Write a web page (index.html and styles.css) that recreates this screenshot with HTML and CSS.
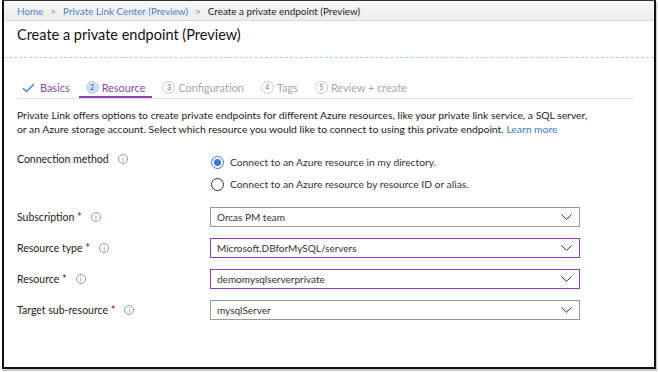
FILE: index.html
```html
<!DOCTYPE html>
<html lang="en">
<head>
    <meta charset="UTF-8">
    <title>Create a private endpoint (Preview)</title>
    <link rel="stylesheet" href="styles.css">
</head>
<body>
    <div class="frame">
        <div class="breadcrumb">
            <a>Home</a>
            <span class="sep">&gt;</span>
            <a>Private Link Center (Preview)</a>
            <span class="sep">&gt;</span>
            <span class="current">Create a private endpoint (Preview)</span>
        </div>

        <h1 class="title">Create a private endpoint (Preview)</h1>
        <div class="dotted"></div>

        <div class="tabs">
            <div class="tab done">
                <svg class="check" width="13" height="10" viewBox="0 0 13 10"><path d="M1 5.2 L4.6 8.6 L12 1" fill="none" stroke="#3b78d8" stroke-width="1.3"/></svg>
                <span>Basics</span>
            </div>
            <div class="tab active">
                <span class="step">2</span>
                <span>Resource</span>
            </div>
            <div class="tab">
                <span class="step">3</span>
                <span>Configuration</span>
            </div>
            <div class="tab">
                <span class="step">4</span>
                <span>Tags</span>
            </div>
            <div class="tab">
                <span class="step">5</span>
                <span>Review + create</span>
            </div>
        </div>

        <p class="intro">Private Link offers options to create private endpoints for different Azure resources, like your private link service, a SQL server,<br>or an Azure storage account. Select which resource you would like to connect to using this private endpoint. <a>Learn more</a></p>

        <div class="form">
            <div class="label">Connection method <i class="info">i</i></div>
            <div class="radios">
                <label class="radio"><span class="dot on"></span>Connect to an Azure resource in my directory.</label>
                <label class="radio"><span class="dot"></span>Connect to an Azure resource by resource ID or alias.</label>
            </div>

            <div class="label">Subscription <b class="req">*</b> <i class="info">i</i></div>
            <div class="select">Orcas PM team<svg width="11" height="6" viewBox="0 0 11 6"><path d="M0.5 0.5 L5.5 5.3 L10.5 0.5" fill="none" stroke="#333" stroke-width="1"/></svg></div>

            <div class="label">Resource type <b class="req">*</b> <i class="info">i</i></div>
            <div class="select focus">Microsoft.DBforMySQL/servers<svg width="11" height="6" viewBox="0 0 11 6"><path d="M0.5 0.5 L5.5 5.3 L10.5 0.5" fill="none" stroke="#333" stroke-width="1"/></svg></div>

            <div class="label">Resource <b class="req">*</b> <i class="info">i</i></div>
            <div class="select focus">demomysqlserverprivate<svg width="11" height="6" viewBox="0 0 11 6"><path d="M0.5 0.5 L5.5 5.3 L10.5 0.5" fill="none" stroke="#333" stroke-width="1"/></svg></div>

            <div class="label">Target sub-resource <b class="req">*</b> <i class="info">i</i></div>
            <div class="select">mysqlServer<svg width="11" height="6" viewBox="0 0 11 6"><path d="M0.5 0.5 L5.5 5.3 L10.5 0.5" fill="none" stroke="#333" stroke-width="1"/></svg></div>
        </div>
    </div>
</body>
</html>
```

FILE: styles.css
```css
* {
    margin: 0;
    padding: 0;
    box-sizing: border-box;
}

html, body {
    width: 100%;
    height: 100%;
    background: #fff;
}

body {
    font-family: Lato, "Liberation Sans", Arial, sans-serif;
    color: #252525;
    font-size: 10.5px;
}

.frame {
    width: 654px;
    height: 369px;
    margin-left: 2px;
    border: 2px solid #111;
    border-top: 1px solid #333;
    box-shadow: 1px 2px 1px #ccc;
    overflow: hidden;
}

.breadcrumb {
    height: 20px;
    padding-left: 13px;
    display: flex;
    align-items: center;
    gap: 6px;
    background: linear-gradient(#f9f9f9, #ececec);
    border-bottom: 1px solid #dcdcdc;
    font-size: 9.9px;
    white-space: nowrap;
}

.breadcrumb a {
    color: #4a7fd0;
}

.breadcrumb .sep {
    color: #888;
    margin: 0 1px;
}

.breadcrumb .current {
    color: #222;
}

.title {
    font-size: 14.5px;
    font-weight: 400;
    color: #111;
    padding: 5px 0 0 13px;
    height: 36px;
}

.dotted {
    border-bottom: 1px dashed #9fd6ea;
}

.tabs {
    margin: 18px 20px 0 13px;
    display: flex;
    align-items: center;
    height: 23px;
    border-bottom: 1px solid #e2e2e2;
    font-size: 10.9px;
    color: #a6a6a6;
    padding-left: 5px;
}

.tab {
    display: flex;
    align-items: center;
    gap: 3px;
    height: 100%;
    margin-right: 17px;
}

.tab.done {
    gap: 5px;
    margin-right: 9px;
}

.tab.done,
.tab.active {
    color: #8547b3;
}

.tab.active {
    border-bottom: 2px solid #8a3fb6;
    padding: 2px 7px 0 7px;
    margin-right: 10px;
}

.check {
    margin-top: 1px;
}

.step {
    width: 13px;
    height: 13px;
    border: 1px solid #c9c9c9;
    border-radius: 50%;
    font-size: 7px;
    line-height: 11px;
    text-align: center;
    color: #777;
}

.tab.active .step {
    background: #cfe0f5;
    border-color: #bcd2ee;
    color: #2f5f9e;
}

.intro {
    margin: 9px 0 0 13px;
    line-height: 14px;
    font-size: 10.35px;
    color: #222;
    white-space: nowrap;
}

.intro a {
    color: #3a78d4;
}

.form {
    margin: 19px 0 0 13px;
    display: grid;
    grid-template-columns: 193px 370px;
    row-gap: 11px;
    align-items: center;
}

.label {
    font-size: 10.5px;
    color: #222;
    align-self: center;
    display: flex;
    align-items: center;
    gap: 4px;
}

.label:first-child {
    align-self: start;
    margin-top: -2px;
}

.req {
    color: #b0302f;
    font-weight: 700;
    margin-left: -1px;
}

.info {
    font-style: normal;
    width: 10px;
    height: 10px;
    border: 1px solid #999;
    border-radius: 50%;
    font-size: 7px;
    line-height: 8px;
    text-align: center;
    color: #888;
    margin-left: 5px;
}

.radios {
    display: flex;
    flex-direction: column;
    gap: 8px;
    margin-bottom: 5px;
}

.radio {
    display: flex;
    align-items: center;
    gap: 6px;
    font-size: 10.3px;
    color: #333;
    height: 14px;
}

.dot {
    width: 13px;
    height: 13px;
    margin-left: 1px;
    border: 1.3px solid #333;
    border-radius: 50%;
    display: flex;
    align-items: center;
    justify-content: center;
}

.dot.on {
    border-color: #3a78d4;
}

.dot.on::after {
    content: "";
    width: 7px;
    height: 7px;
    border-radius: 50%;
    background: #3a78d4;
}

.select {
    height: 20px;
    border: 1px solid #9a9a9a;
    display: flex;
    align-items: center;
    justify-content: space-between;
    padding: 0 7px 0 6px;
    font-size: 10px;
    color: #333;
}

.select.focus {
    border-color: #8c3fbf;
}
```
